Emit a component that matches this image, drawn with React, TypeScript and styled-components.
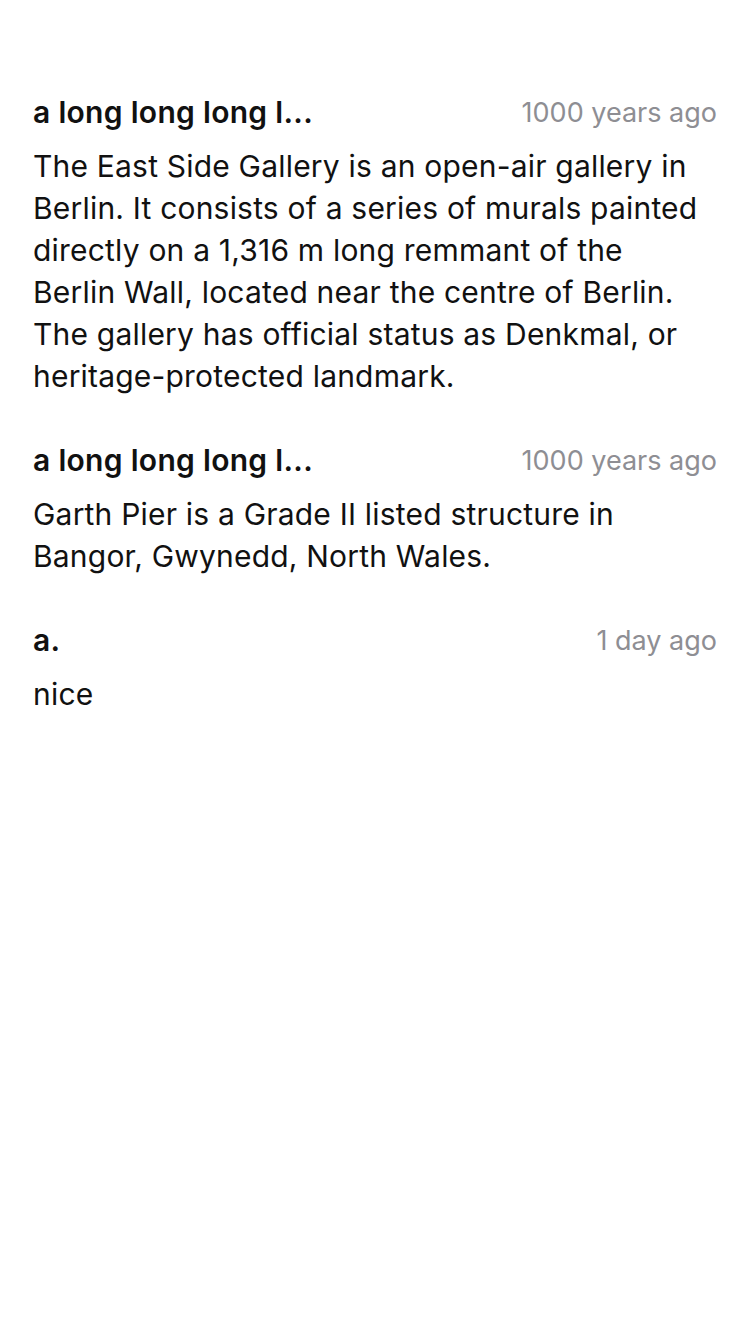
import React from "react";
import styled, { createGlobalStyle } from "styled-components";

const Global = createGlobalStyle`
  html, body { margin: 0; padding: 0; background: #ffffff; }
  body { font-family: Inter, "Liberation Sans", Arial, sans-serif; -webkit-font-smoothing: antialiased; }
`;

const Page = styled.div`
  width: 750px;
  min-height: 1334px;
  box-sizing: border-box;
  padding: 92px 33px 0 33px;
  display: flex;
  flex-direction: column;
  gap: 43px;
  background: #fff;
`;

const Comment = styled.section`
  display: flex;
  flex-direction: column;
  gap: 13px;
`;

const Header = styled.div`
  display: flex;
  align-items: center;
  justify-content: space-between;
  height: 40px;
`;

const Author = styled.span`
  font-size: 30px;
  font-weight: 600;
  letter-spacing: 0.3px;
  color: #111;
`;

const Time = styled.span`
  font-size: 27px;
  color: #8e8e93;
`;

const Body = styled.p`
  margin: 0;
  max-width: 670px;
  font-size: 30px;
  line-height: 42px;
  letter-spacing: 0.2px;
  color: #111;
`;

const comments = [
  {
    author: "a long long long l...",
    time: "1000 years ago",
    text: "The East Side Gallery is an open-air gallery in Berlin. It consists of a series of murals painted directly on a 1,316 m long remmant of the Berlin Wall, located near the centre of Berlin. The gallery has official status as Denkmal, or heritage-protected landmark.",
  },
  {
    author: "a long long long l...",
    time: "1000 years ago",
    text: "Garth Pier is a Grade II listed structure in Bangor, Gwynedd, North Wales.",
  },
  { author: "a.", time: "1 day ago", text: "nice" },
];

export default function App() {
  return (
    <>
      <Global />
      <Page>
        {comments.map((c, i) => (
          <Comment key={i}>
            <Header>
              <Author>{c.author}</Author>
              <Time>{c.time}</Time>
            </Header>
            <Body>{c.text}</Body>
          </Comment>
        ))}
      </Page>
    </>
  );
}
